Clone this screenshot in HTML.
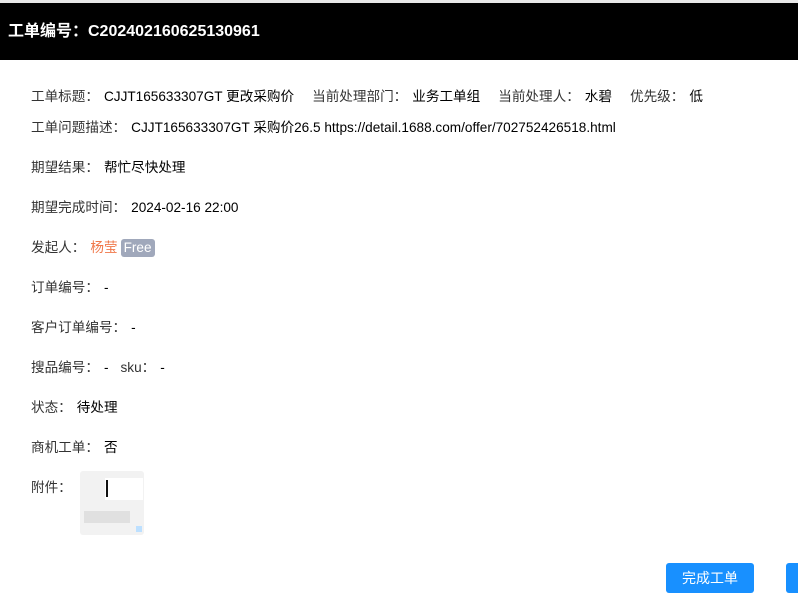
<!DOCTYPE html>
<html><head><meta charset="utf-8"><style>
body{margin:0;width:798px;height:583px;overflow:hidden;background:#fff;font-family:"Liberation Sans","Noto Sans CJK SC",sans-serif;font-size:13.6px;color:#000;position:relative}
.top{position:absolute;left:0;top:0;width:798px;height:3px;background:#e8e8e8}
.hd{position:absolute;left:0;top:3px;width:798px;height:57px;background:#000;color:#fff;font-weight:bold;font-size:16px;line-height:57px;padding-left:8px;box-sizing:border-box}
.r{position:absolute;left:31px;white-space:nowrap;line-height:18px}
.l{color:#333}
.v{margin-left:5px}
.tag{display:inline-block;background:#a0a8bb;color:#fff;border-radius:3px;padding:0 3px;line-height:18px;margin-left:3px}
.att{position:absolute;left:80px;top:471px;width:64px;height:64px;background:#f2f2f2;border-radius:3px}
.btn{position:absolute;top:563px;height:30px;background:#1890ff;border-radius:3px;color:#fff;font-size:14px;text-align:center;line-height:30px}
</style></head><body>
<div class="top"></div>
<div class="hd">工单编号：C202402160625130961</div>
<div class="r" style="top:88px"><span class="l">工单标题：</span><span class="v">CJJT165633307GT 更改采购价</span><span class="l" style="margin-left:18px">当前处理部门：</span><span class="v">业务工单组</span><span class="l" style="margin-left:18px">当前处理人：</span><span class="v">水碧</span><span class="l" style="margin-left:18px">优先级：</span><span class="v">低</span></div>
<div class="r" style="top:119px"><span class="l">工单问题描述：</span><span class="v">CJJT165633307GT 采购价26.5 https://detail.1688.com/offer/702752426518.html</span></div>
<div class="r" style="top:159px"><span class="l">期望结果：</span><span class="v">帮忙尽快处理</span></div>
<div class="r" style="top:199px"><span class="l">期望完成时间：</span><span class="v">2024-02-16 22:00</span></div>
<div class="r" style="top:239px"><span class="l">发起人：</span><span class="v" style="color:#f0784a">杨莹</span><span class="tag">Free</span></div>
<div class="r" style="top:279px"><span class="l">订单编号：</span><span class="v">-</span></div>
<div class="r" style="top:319px"><span class="l">客户订单编号：</span><span class="v">-</span></div>
<div class="r" style="top:359px"><span class="l">搜品编号：</span><span class="v">-</span><span class="l" style="margin-left:12px">sku：</span><span class="v">-</span></div>
<div class="r" style="top:399px"><span class="l">状态：</span><span class="v">待处理</span></div>
<div class="r" style="top:439px"><span class="l">商机工单：</span><span class="v">否</span></div>
<div class="r" style="top:479px"><span class="l">附件：</span></div>
<div class="att">
<div style="position:absolute;left:25px;top:7px;width:38px;height:22px;background:#fff"></div>
<div style="position:absolute;left:26px;top:9px;width:2px;height:17px;background:#111"></div>
<div style="position:absolute;left:4px;top:40px;width:46px;height:12px;background:#e0e0e0"></div>
<div style="position:absolute;left:56px;top:55px;width:6px;height:6px;background:#bde0ff"></div>
</div>
<div class="btn" style="left:666px;width:88px">完成工单</div>
<div class="btn" style="left:786px;width:20px"></div>
</body></html>
